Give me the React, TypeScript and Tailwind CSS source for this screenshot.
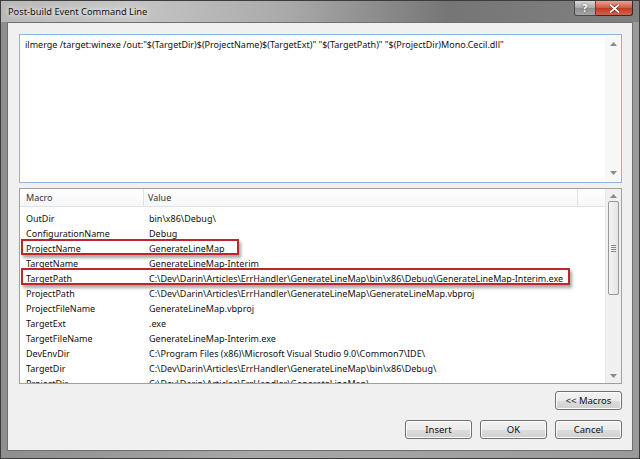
import React from 'react';

const rows: [string, string][] = [
  ['OutDir', 'bin\\x86\\Debug\\'],
  ['ConfigurationName', 'Debug'],
  ['ProjectName', 'GenerateLineMap'],
  ['TargetName', 'GenerateLineMap-Interim'],
  ['TargetPath', 'C:\\Dev\\Darin\\Articles\\ErrHandler\\GenerateLineMap\\bin\\x86\\Debug\\GenerateLineMap-Interim.exe'],
  ['ProjectPath', 'C:\\Dev\\Darin\\Articles\\ErrHandler\\GenerateLineMap\\GenerateLineMap.vbproj'],
  ['ProjectFileName', 'GenerateLineMap.vbproj'],
  ['TargetExt', '.exe'],
  ['TargetFileName', 'GenerateLineMap-Interim.exe'],
  ['DevEnvDir', 'C:\\Program Files (x86)\\Microsoft Visual Studio 9.0\\Common7\\IDE\\'],
  ['TargetDir', 'C:\\Dev\\Darin\\Articles\\ErrHandler\\GenerateLineMap\\bin\\x86\\Debug\\'],
  ['ProjectDir', 'C:\\Dev\\Darin\\Articles\\ErrHandler\\GenerateLineMap\\'],
];

const Arrow = ({ up }: { up?: boolean }) => (
  <svg width="7" height="4" viewBox="0 0 7 4">
    <path d={up ? 'M0 4 L3.5 0 L7 4 Z' : 'M0 0 L3.5 4 L7 0 Z'} fill="#8a8a8a" />
  </svg>
);

const Button = ({ label }: { label: string }) => (
  <button className="w-[67px] h-[19px] rounded-[3px] border border-[#707070] bg-[linear-gradient(#f2f2f2_0%,#ebebeb_50%,#dddddd_51%,#cfcfcf_100%)] text-[9.5px] text-[#111] leading-none shadow-[inset_0_0_0_1px_#fcfcfc]">
    {label}
  </button>
);

export default function App() {
  return (
    <div
      className="w-[640px] h-[459px] flex flex-col overflow-hidden border border-[#3c3c3c] bg-[linear-gradient(90deg,#8e8e8e,#a8a8a8_40%,#9a9a9a)] text-[#111]"
      style={{ fontFamily: '"Noto Sans", "Liberation Sans", sans-serif' }}
    >
      {/* Title bar */}
      <div className="h-[21px] flex items-start relative bg-[linear-gradient(90deg,#b8b8b8_0%,#c6c6c6_20%,#a9a9a9_45%,#767676_70%,#808080_100%)]">
        <div className="pl-[7px] pt-[4px] text-[9.3px] text-[#111] [text-shadow:0_0_8px_#ffffff,0_0_4px_#ffffff]">
          Post-build Event Command Line
        </div>
        <div className="ml-auto mr-[6px] flex">
          <div className="w-[22px] h-[15px] rounded-bl-[3px] border border-t-0 border-[#4a4a4a] bg-[linear-gradient(#d8d8d8,#a8a8a8_50%,#8e8e8e_51%,#a5a5a5)] flex items-center justify-center text-[10px] font-bold text-white [text-shadow:0_0_2px_#444]">
            ?
          </div>
          <div className="w-[37px] h-[15px] rounded-br-[3px] border border-t-0 border-l-0 border-[#4a2020] bg-[linear-gradient(#e8a493,#d0583f_50%,#c2391f_51%,#d0654c)] flex items-center justify-center">
            <svg width="11" height="9" viewBox="0 0 11 9">
              <path d="M1 0.5 L10 8.5 M10 0.5 L1 8.5" stroke="#5a1a10" strokeWidth="3" />
              <path d="M1 0.5 L10 8.5 M10 0.5 L1 8.5" stroke="#ffffff" strokeWidth="1.8" />
            </svg>
          </div>
        </div>
      </div>

      {/* Client area */}
      <div className="flex-1 mx-[6px] mb-[7px] border border-[#6f6f6f] bg-[#f0f0f0] flex flex-col pl-[11px] pr-[10px] pt-[11px] relative">
        {/* Command text box */}
        <div className="h-[149px] border border-[#8fb5d8] bg-white flex">
          <div className="flex-1 pl-[5px] pt-[3px] text-[9px] text-[#111] whitespace-nowrap">
            ilmerge /target:winexe /out:"$(TargetDir)$(ProjectName)$(TargetExt)" "$(TargetPath)" "$(ProjectDir)Mono.Cecil.dll"
          </div>
          <div className="w-[16px] bg-[#f7f7f7] flex flex-col items-center justify-between py-[7px]">
            <Arrow up />
            <Arrow />
          </div>
        </div>

        {/* Macro list */}
        <div className="mt-[5px] h-[196px] border border-[#a0a0a0] bg-white flex overflow-hidden">
          <div className="flex-1 flex flex-col">
            <div className="h-[18px] shrink-0 flex border-b border-[#e2e2e2] bg-[linear-gradient(#ffffff,#f6f7f8)] text-[9px] text-[#333]">
              <div className="w-[124px] pl-[6px] flex items-center border-r border-[#e2e2e2]">Macro</div>
              <div className="w-[434px] pl-[4px] flex items-center border-r border-[#e2e2e2]">Value</div>
            </div>
            <div className="pt-[4px] flex flex-col">
              {rows.map(([k, v]) => (
                <div key={k} className="h-[15px] shrink-0 flex items-center text-[9px] text-[#111] whitespace-nowrap">
                  <div className="w-[124px] pl-[6px]">{k}</div>
                  <div className="pl-[5px]">{v}</div>
                </div>
              ))}
            </div>
          </div>
          <div className="w-[16px] bg-[#f0f0f0] border-l border-[#e8e8e8] flex flex-col items-center py-[5px]">
            <Arrow up />
            <div className="mt-[3px] w-[11px] h-[94px] rounded-[2px] border border-[#9a9a9a] bg-[linear-gradient(90deg,#f4f4f4,#e4e4e4)] flex items-center justify-center">
              <div className="flex flex-col gap-[1px]">
                <div className="w-[5px] h-[1px] bg-[#8a8a8a]" />
                <div className="w-[5px] h-[1px] bg-[#8a8a8a]" />
                <div className="w-[5px] h-[1px] bg-[#8a8a8a]" />
                <div className="w-[5px] h-[1px] bg-[#8a8a8a]" />
              </div>
            </div>
            <div className="mt-auto">
              <Arrow />
            </div>
          </div>
        </div>

        {/* Highlight boxes */}
        <div className="absolute left-[13px] top-[216px] w-[218px] h-[16px] border-2 border-[#c0242c] shadow-[2px_3px_3px_rgba(0,0,0,0.35)]" />
        <div className="absolute left-[13px] top-[245px] w-[549px] h-[17px] border-2 border-[#c0242c] shadow-[2px_3px_3px_rgba(0,0,0,0.35)]" />

        {/* Buttons */}
        <div className="mt-[7px] flex justify-end">
          <Button label="<< Macros" />
        </div>
        <div className="mt-[10px] flex justify-end gap-[8px]">
          <Button label="Insert" />
          <Button label="OK" />
          <Button label="Cancel" />
        </div>
      </div>
    </div>
  );
}
